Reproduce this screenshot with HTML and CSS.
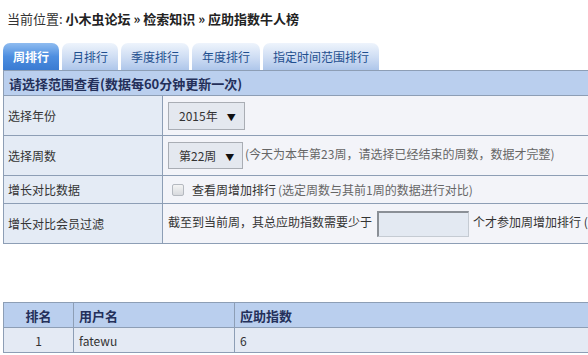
FILE: index.html
```html
<!DOCTYPE html>
<html lang="zh">
<head>
    <meta charset="UTF-8">
    <title>应助指数牛人榜</title>
    <link rel="stylesheet" href="styles.css">
</head>
<body>
    <div class="crumb">当前位置: <b>小木虫论坛</b> <b>»</b> <b>检索知识</b> <b>»</b> <b>应助指数牛人榜</b></div>

    <ul class="tabs">
        <li class="on">周排行</li>
        <li>月排行</li>
        <li>季度排行</li>
        <li>年度排行</li>
        <li>指定时间范围排行</li>
    </ul>

    <table class="form">
        <tr>
            <th colspan="2" class="title">请选择范围查看(数据每60分钟更新一次)</th>
        </tr>
        <tr class="tall">
            <td class="label">选择年份</td>
            <td><span class="select year">2015年<i>▼</i></span></td>
        </tr>
        <tr class="tall">
            <td class="label">选择周数</td>
            <td><span class="select week">第22周<i>▼</i></span><span class="tip">(今天为本年第23周，请选择已经结束的周数，数据才完整)</span></td>
        </tr>
        <tr class="short">
            <td class="label">增长对比数据</td>
            <td><span class="check"></span>查看周增加排行<span class="tip">(选定周数与其前1周的数据进行对比)</span></td>
        </tr>
        <tr class="tall">
            <td class="label">增长对比会员过滤</td>
            <td class="nowrap">截至到当前周，其总应助指数需要少于<span class="field"></span>个才参加周增加排行 (</td>
        </tr>
    </table>

    <table class="list">
        <tr>
            <th class="rank">排名</th>
            <th class="user">用户名</th>
            <th>应助指数</th>
        </tr>
        <tr>
            <td class="rank">1</td>
            <td>fatewu</td>
            <td>6</td>
        </tr>
    </table>
</body>
</html>
```

FILE: styles.css
```css
/* 全局 */
html {
    overflow: hidden;
}

body {
    margin: 0;
    font-family: "Noto Sans CJK SC", "DejaVu Sans", sans-serif;
    font-size: 12px;
    color: #333;
    background: #fff;
}

/* 面包屑 */
.crumb {
    padding: 10px 0 0 7px;
    height: 43px;
    box-sizing: border-box;
    font-size: 13px;
    line-height: 17px;
    color: #333;
}

.crumb b {
    color: #222;
}

/* 标签 */
.tabs {
    list-style: none;
    margin: 0 0 0 3px;
    padding: 0;
    display: flex;
    gap: 3px;
    height: 27px;
}

.tabs li {
    padding: 0 10px;
    line-height: 27px;
    font-size: 12px;
    color: #1f4f8f;
    border-radius: 7px 7px 0 0;
    background: linear-gradient(#eef4fc, #cddcf3 55%, #aec6ea);
}

.tabs li.on {
    color: #fff;
    font-weight: bold;
    background: linear-gradient(#8fbcf0, #4d8ee0 50%, #3a7bd2);
}

/* 表单表格 */
table {
    border-collapse: collapse;
    width: 720px;
    margin-left: 3px;
}

td, th {
    border: 1px solid #8d9eb5;
    padding: 0 0 0 5px;
    text-align: left;
}

.form .title {
    height: 24px;
    background: #bacfee;
    color: #24305a;
    font-weight: bold;
    font-size: 13px;
}

.form td {
    background: #f3f4f9;
    color: #333;
}

.form td.label {
    width: 154px;
    padding-left: 4px;
    background: #e4ebf5;
}

.form tr.tall td {
    height: 39px;
}

.form tr.short td {
    height: 27px;
}

.nowrap {
    white-space: nowrap;
}

.select {
    display: inline-block;
    box-sizing: border-box;
    height: 28px;
    line-height: 26px;
    padding-left: 10px;
    border: 1px solid #a9adb4;
    background: #e4e8ef;
    color: #333;
    font-size: 12px;
    vertical-align: middle;
}

.select.year {
    width: 77px;
}

.select.week {
    width: 75px;
    height: 27px;
}

.select i {
    font-style: normal;
    font-size: 9px;
    margin-left: 9px;
    color: #111;
}

.tip {
    color: #666;
    margin-left: 2px;
}

.check {
    display: inline-block;
    width: 10px;
    height: 10px;
    margin: 0 8px 0 4px;
    border: 1px solid #b5b9c0;
    border-radius: 2px;
    background: linear-gradient(#f4f4f4, #d8dade);
    vertical-align: -1px;
}

.field {
    display: inline-block;
    box-sizing: border-box;
    width: 92px;
    height: 26px;
    margin: 0 4px 0 5px;
    border: 1px solid #c5cbd3;
    border-top: 2px solid #8a8f96;
    border-left: 2px solid #8a8f96;
    background: #e3e9f2;
    vertical-align: middle;
}

/* 排名表 */
.list {
    margin-top: 58px;
}

.list th {
    height: 24px;
    background: #bacfee;
    color: #24305a;
    font-size: 13px;
}

.list td {
    height: 24px;
    background: #e4eaf4;
}

.list .rank {
    width: 69px;
    padding: 0;
    text-align: center;
}

.list .user {
    width: 155px;
}
```
